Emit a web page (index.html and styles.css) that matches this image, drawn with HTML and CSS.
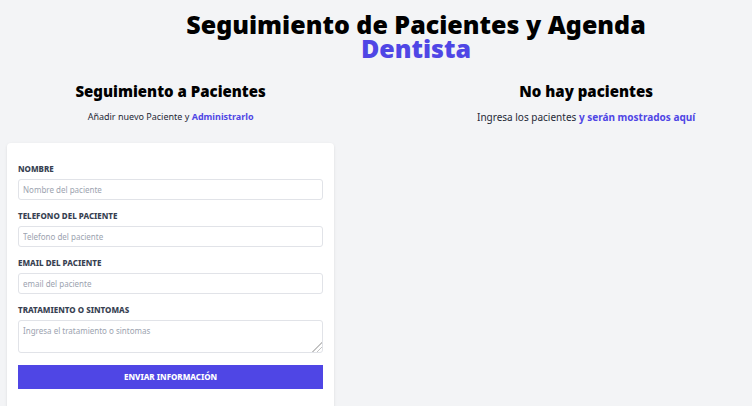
FILE: index.html
```html
<!DOCTYPE html>
<html lang="es">
<head>
<meta charset="utf-8">
<meta name="viewport" content="width=device-width, initial-scale=1">
<title>Seguimiento de Pacientes</title>
<link rel="stylesheet" href="styles.css">
</head>
<body>
<header class="header">
  <h1 class="title">Seguimiento de Pacientes y Agenda <span class="accent title-accent">Dentista</span></h1>
</header>
<main class="columns">
  <section class="form-column">
    <h2 class="subtitle">Seguimiento a Pacientes</h2>
    <p class="intro intro-small">Añadir nuevo Paciente y <span class="accent">Administrarlo</span></p>
    <form class="card">
      <div class="field">
        <label for="nombre">Nombre</label>
        <input id="nombre" type="text" placeholder="Nombre del paciente">
      </div>
      <div class="field">
        <label for="telefono">Telefono del paciente</label>
        <input id="telefono" type="tel" placeholder="Telefono del paciente">
      </div>
      <div class="field">
        <label for="email">Email del paciente</label>
        <input id="email" type="email" placeholder="email del paciente">
      </div>
      <div class="field">
        <label for="sintomas">Tratamiento o sintomas</label>
        <textarea id="sintomas" placeholder="Ingresa el tratamiento o sintomas"></textarea>
      </div>
      <button class="submit" type="submit">Enviar información</button>
    </form>
  </section>
  <section class="list-column">
    <h2 class="subtitle">No hay pacientes</h2>
    <p class="intro">Ingresa los pacientes <span class="accent">y serán mostrados aquí</span></p>
  </section>
</main>
</body>
</html>
```
FILE: styles.css
```css
* {
  box-sizing: border-box;
}

body {
  margin: 0;
  background: #f3f4f6;
  color: #1f2937;
  font-family: "Noto Sans", "Open Sans", sans-serif;
}

h1, h2, p {
  margin: 0;
  text-align: center;
}

.header {
  padding: 12px 0 0 80px;
}

.title {
  color: #000;
  font-size: 25px;
  line-height: 24px;
  font-weight: 900;
}

.title-accent {
  display: block;
}

.accent {
  color: #4f46e5;
}

.intro .accent {
  font-weight: 700;
}

.columns {
  display: grid;
  grid-template-columns: 4fr 5fr;
  padding-top: 22px;
}

.form-column {
  padding-left: 7px;
}

.list-column {
  padding-left: 86px;
}

.subtitle {
  color: #000;
  font-size: 15px;
  line-height: 18px;
  font-weight: 900;
}

.intro {
  margin-top: 9px;
  font-size: 10px;
  line-height: 16px;
}

.intro-small {
  font-size: 9px;
}

.card {
  display: flex;
  flex-direction: column;
  gap: 11px;
  margin-top: 18px;
  padding: 21px 11px 24px;
  background: #fff;
  border-radius: 4px;
  box-shadow: 0 1px 3px rgba(0, 0, 0, 0.1);
}

.field {
  display: flex;
  flex-direction: column;
  gap: 5px;
}

label {
  color: #374151;
  font-size: 8px;
  line-height: 10px;
  font-weight: 800;
  text-transform: uppercase;
}

input, textarea {
  display: block;
  width: 100%;
  padding: 4px;
  border: 1px solid #e1e3e8;
  border-radius: 3px;
  background: #fff;
  color: #1f2937;
  font: 8px/12px "Noto Sans", "Open Sans", sans-serif;
}

input {
  height: 21px;
}

textarea {
  height: 33px;
}

textarea::-webkit-resizer {
  background: linear-gradient(135deg, transparent 66%, #c4c4c4 66%, #c4c4c4 71%, transparent 71%, transparent 80%, #c4c4c4 80%, #c4c4c4 85%, transparent 85%);
}

::placeholder {
  color: #9ca3af;
  opacity: 1;
}

.submit {
  height: 24px;
  margin-top: 1px;
  padding: 0;
  border: 0;
  background: #4f46e5;
  color: #fff;
  font: 800 8px/24px "Noto Sans", "Open Sans", sans-serif;
  text-transform: uppercase;
}
```
